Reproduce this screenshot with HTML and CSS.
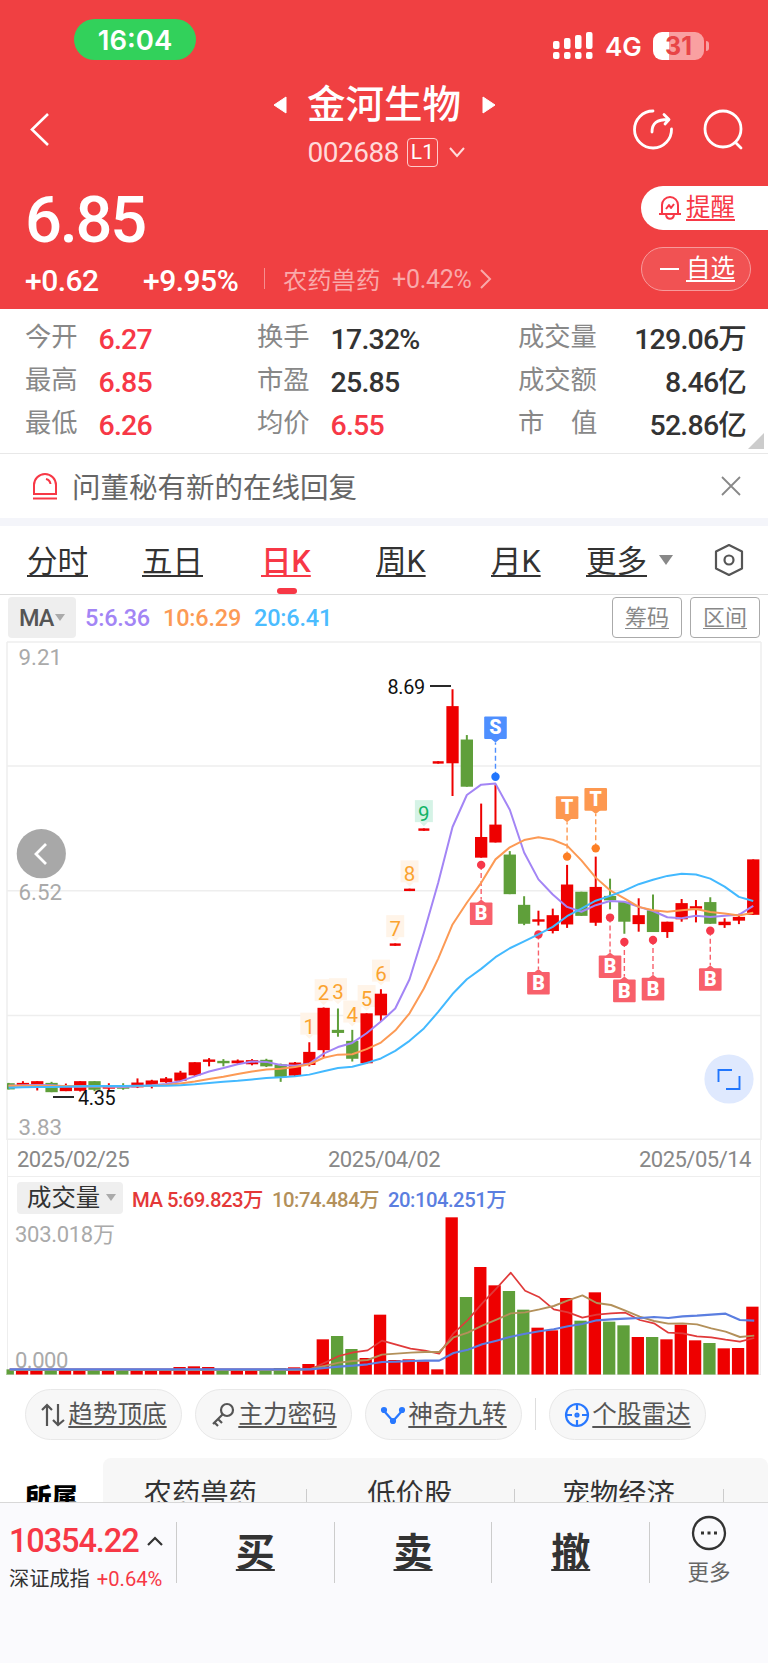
FILE: index.html
```html
<!DOCTYPE html>
<html lang="zh-CN">
<head>
  <meta charset="utf-8">
  <title>金河生物 002688</title>
  <link rel="stylesheet" href="styles.css">
</head>
<body>
  <div class="app">
    <header class="header">
      <div class="status-bar">
        <span class="clock">16:04</span>
        <div class="status-icons">
          <svg width="41" height="28" fill="#fff">
            <rect x="0" y="9" width="6.500" height="8" rx="2"/><rect x="11" y="6" width="6.500" height="11" rx="2"/>
            <rect x="22" y="3" width="6.500" height="14" rx="2"/><rect x="33" y="0" width="6.500" height="17" rx="2"/>
            <rect x="0" y="20" width="6.500" height="7" rx="2"/><rect x="11" y="20" width="6.500" height="7" rx="2"/>
            <rect x="22" y="20" width="6.500" height="7" rx="2"/><rect x="33" y="20" width="6.500" height="7" rx="2"/>
          </svg>
          <span class="network">4G</span>
          <span class="battery">31</span><i class="battery-tip"></i>
        </div>
      </div>

      <div class="title-bar">
        <svg class="back" width="20" height="33" fill="none" stroke="#fff" stroke-width="2.6"><path d="M19 1L3 16.500L19 32"/></svg>
        <div class="title">
          <div class="name-row">
            <svg width="14" height="18" fill="#fff" stroke="#fff" stroke-linejoin="round"><path d="M13 1V17L1 9Z"/></svg>
            <span class="name">金河生物</span>
            <svg width="14" height="18" fill="#fff" stroke="#fff" stroke-linejoin="round"><path d="M1 1V17L13 9Z"/></svg>
          </div>
          <div class="code-row">
            <span class="code">002688</span>
            <span class="level">L1</span>
            <svg width="16" height="11" fill="none" stroke="#ffdcdc" stroke-width="2"><path d="M1 1L8 9L15 1"/></svg>
          </div>
        </div>
        <div class="title-actions">
          <svg width="41" height="41" fill="none" stroke="#fff" stroke-width="2.8" stroke-linecap="round" stroke-linejoin="round">
            <path d="M20 2A18.500 18.500 0 1 0 38.500 20"/><path d="M19 23C19 14 24 10.500 35 10.500M31 5.500L36 10.500L32 15"/>
          </svg>
          <svg width="41" height="41" fill="none" stroke="#fff" stroke-width="2.8" stroke-linecap="round">
            <circle cx="20" cy="20" r="18"/><path d="M33 34L38 39"/>
          </svg>
        </div>
      </div>

      <div class="quote">
        <div class="quote-left">
          <div class="price">6.85</div>
          <div class="change-row">
            <span class="change">+0.62</span>
            <span class="percent">+9.95%</span>
            <i class="bar"></i>
            <span class="sector">农药兽药</span>
            <span class="sector-pct">+0.42%</span>
            <svg width="12" height="20" fill="none" stroke="#f9a9aa" stroke-width="2"><path d="M1 1L10 10L1 19"/></svg>
          </div>
        </div>
        <div class="quote-right">
          <div class="pill alert">
            <svg width="24" height="26" fill="none" stroke="#f73846" stroke-width="2" stroke-linejoin="round">
              <path d="M1 19H23M4 19V10A8 8 0 0 1 20 10V19M8 20C9 25 15 25 16 20M8 14L11 10L13 13L16 9"/>
            </svg>
            <span>提醒</span>
          </div>
          <div class="pill watch"><i></i><span>自选</span></div>
        </div>
      </div>
    </header>

    <section class="stats">
      <div class="col col-1">
        <p><label>今开</label><b class="up">6.27</b></p>
        <p><label>最高</label><b class="up">6.85</b></p>
        <p><label>最低</label><b class="up">6.26</b></p>
      </div>
      <div class="col col-2">
        <p><label>换手</label><b>17.32%</b></p>
        <p><label>市盈</label><b>25.85</b></p>
        <p><label>均价</label><b class="up">6.55</b></p>
      </div>
      <div class="col col-3">
        <p><label>成交量</label><b>129.06万</b></p>
        <p><label>成交额</label><b>8.46亿</b></p>
        <p><label>市&emsp;值</label><b>52.86亿</b></p>
      </div>
      <i class="corner"></i>
    </section>

    <section class="notice">
      <svg width="26" height="27" fill="none" stroke="#f73846" stroke-width="2">
        <path d="M2 21V12A11 11 0 0 1 24 12V21ZM1 25.500H25M14 6Q18 7 18.500 11"/>
      </svg>
      <span>问董秘有新的在线回复</span>
      <svg class="close" width="20" height="20" stroke="#888" stroke-width="1.8"><path d="M1 1L19 19M19 1L1 19"/></svg>
    </section>

    <nav class="tabs">
      <a>分时</a><a>五日</a><a class="active">日K</a><a>周K</a><a>月K</a><a class="more">更多</a>
      <i class="tri big"></i>
      <svg width="32" height="34" fill="none" stroke="#555" stroke-width="2.2" stroke-linejoin="round">
        <path d="M16 2L29 8.500V25.500L16 32L3 25.500V8.500Z"/><circle cx="16" cy="17" r="4.500"/>
      </svg>
    </nav>

    <div class="ma-row">
      <span class="ma-select">MA<i class="tri"></i></span>
      <span class="ma5">5:6.36</span><span class="ma10">10:6.29</span><span class="ma20">20:6.41</span>
      <a class="tool">筹码</a><a class="tool">区间</a>
    </div>

    <svg class="k-chart" id="kChart" width="768" height="500" viewBox="0 0 768 500"></svg>

    <div class="dates"><span>2025/02/25</span><span>2025/04/02</span><span>2025/05/14</span></div>

    <div class="volume">
      <div class="vol-row">
        <span class="vol-select">成交量<i class="tri"></i></span>
        <span class="v5">MA 5:69.823万</span><span class="v10">10:74.484万</span><span class="v20">20:104.251万</span>
      </div>
      <svg id="vChart" width="768" height="160" viewBox="0 0 768 160"></svg>
    </div>

    <div class="chips">
      <a class="chip">
        <svg width="26" height="26" fill="none" stroke="#555" stroke-width="2.2"><path d="M7 24V3M2 8L7 3L12 8M18 2V23M13 18L18 23L24 18"/></svg>
        <span>趋势顶底</span>
      </a>
      <a class="chip">
        <svg width="26" height="26" fill="none" stroke="#555" stroke-width="2.2"><circle cx="17" cy="8" r="6"/><path d="M13 12L3 22M8 17L12 21M4 20L8 24"/></svg>
        <span>主力密码</span>
      </a>
      <a class="chip">
        <svg width="26" height="26" fill="#2878ff" stroke="#2878ff" stroke-width="2.2"><path d="M4 9L13 19L22 9" fill="none"/><circle cx="4" cy="8" r="2"/><circle cx="13" cy="19" r="2"/><circle cx="22" cy="8" r="2"/></svg>
        <span>神奇九转</span>
      </a>
      <i class="chip-line"></i>
      <a class="chip">
        <svg width="26" height="26" fill="none" stroke="#2878ff" stroke-width="2.2"><circle cx="13" cy="13" r="11"/><path d="M13 2V8M13 18V24M2 13H8M18 13H24"/><circle cx="13" cy="13" r="1.500"/></svg>
        <span>个股雷达</span>
      </a>
    </div>

    <div class="concepts">
      <b>所属</b>
      <div class="concept-list"><span>农药兽药</span><span>低价股</span><span>宠物经济</span></div>
    </div>

    <footer class="footer">
      <div class="index">
        <div class="index-value">10354.22 <svg width="16" height="10" fill="none" stroke="#333" stroke-width="2.2"><path d="M1 9L8 2L15 9"/></svg></div>
        <div class="index-name">深证成指 <em>+0.64%</em></div>
      </div>
      <a class="trade">买</a>
      <a class="trade">卖</a>
      <a class="trade">撤</a>
      <div class="footer-more">
        <svg width="36" height="36" fill="none" stroke="#333" stroke-width="2.3">
          <circle cx="18" cy="18" r="16"/><path d="M10 18H13M16.500 18H19.500M23 18H26" stroke-width="3"/>
        </svg>
        <span>更多</span>
      </div>
    </footer>
  </div>
<script src="chart.js"></script>
</body>
</html>
```
FILE: styles.css
```css
* {
  box-sizing: border-box;
}

body {
  margin: 0;
  background: #fff;
  color: #333;
  font-family: Roboto, "Noto Sans CJK SC", sans-serif;
}

p {
  margin: 0;
}

svg {
  display: block;
  flex: none;
}

.app {
  width: 768px;
  height: 1663px;
  overflow: hidden;
  display: flex;
  flex-direction: column;
}

.app > * {
  flex: none;
}

/* red header */
.header {
  height: 309px;
  background: #f04042;
  color: #fff;
}

.status-bar {
  height: 80px;
  padding: 19px 59px 0 74px;
  display: flex;
  justify-content: space-between;
  font-family: Inter, sans-serif;
}

.clock {
  width: 122px;
  height: 41px;
  border-radius: 21px;
  background: #32d15b;
  font-size: 27.5px;
  font-weight: 600;
  line-height: 42px;
  text-align: center;
}

.status-icons {
  display: flex;
  height: 28px;
  margin-top: 13px;
  align-items: center;
}

.network {
  width: 38px;
  margin: 1px 10px 0 11px;
  font-size: 26px;
  font-weight: 600;
}

.battery {
  width: 51px;
  height: 28px;
  border-radius: 9px;
  background: linear-gradient(90deg, #fff 31%, #f9a0a1 31%);
  color: #e84446;
  font-size: 25px;
  font-weight: 700;
  line-height: 28px;
  text-align: center;
}

.battery-tip {
  width: 3px;
  height: 10px;
  margin-left: 2px;
  border-radius: 0 4px 4px 0;
  background: #f9a0a1;
}

.title-bar {
  height: 98px;
  padding: 0 24px 0 29px;
  display: flex;
}

.back {
  margin-top: 33px;
}

.title {
  margin-left: 223.5px;
}

.name-row {
  height: 50px;
  display: flex;
  align-items: center;
  gap: 20.5px;
}

.name {
  font-size: 38.5px;
  font-weight: 500;
  line-height: 50px;
}

.code-row {
  height: 44px;
  display: flex;
  align-items: center;
  padding-left: 35px;
}

.code {
  font-size: 28px;
  letter-spacing: -0.5px;
  color: #ffdada;
}

.level {
  width: 31px;
  height: 29px;
  margin: 0 11px 0 8px;
  border: 1px solid #ffcaca;
  border-radius: 4px;
  font-size: 21px;
  line-height: 27px;
  text-align: center;
}

.title-actions {
  display: flex;
  gap: 29px;
  margin-left: auto;
  padding-top: 29px;
}

.quote {
  display: flex;
  justify-content: space-between;
}

.quote-left {
  padding: 8px 0 0 25px;
}

.price {
  height: 68px;
  font-size: 65px;
  font-weight: 500;
  line-height: 68px;
  letter-spacing: -2.2px;
}

.change-row {
  height: 52px;
  display: flex;
  align-items: center;
}

.change,
.percent {
  width: 119px;
  font-size: 30px;
  font-weight: 500;
  letter-spacing: -0.5px;
}

.change {
  width: 118px;
}

.bar {
  width: 1px;
  height: 21px;
  margin: 0 18px 3px 2px;
  background: #f68e8f;
}

.sector {
  width: 109px;
  margin-top: -4px;
  font-size: 24.3px;
  color: #f9a9aa;
}

.sector-pct {
  width: 88px;
  margin-top: -2px;
  font-size: 25px;
  letter-spacing: -0.3px;
  color: #f9a9aa;
}

.change-row svg {
  margin-top: -3px;
}

.quote-right {
  width: 127px;
  padding-top: 8px;
}

.pill {
  height: 44px;
  padding-left: 17px;
  border-radius: 22px;
  display: flex;
  align-items: center;
  font-size: 24.5px;
  line-height: 40px;
}

.pill span,
.tabs a,
.tool,
.chip span,
.trade {
  text-decoration: underline;
  text-decoration-thickness: 2px;
  text-decoration-skip-ink: none;
  text-underline-offset: 3px;
}

.alert {
  border-radius: 22px 0 0 22px;
  background: #fff;
  color: #f73846;
}

.alert span {
  margin-left: 4px;
}

.watch {
  width: 110px;
  margin-top: 17px;
  border: 1px solid #f79a9b;
  background: #f15253;
}

.watch i {
  width: 19px;
  height: 2px;
  margin: 0 7px 0 1px;
  background: #fff;
}

/* stats table */
.stats {
  position: relative;
  height: 145px;
  padding: 7px 22px 0 25px;
  border-bottom: 1px solid #e8e8e8;
  display: flex;
}

.stats p {
  height: 43px;
  display: flex;
  align-items: center;
}

.stats label {
  font-size: 26.3px;
  line-height: 40px;
  color: #888;
  margin-top: -1px;
}

.stats b {
  font-size: 28.5px;
  font-weight: 500;
  line-height: 40px;
  letter-spacing: -0.8px;
  margin: 4px 0 0 21px;
}

.stats .up {
  color: #f73846;
}

.col-1 {
  width: 232px;
}

.col-2 {
  width: 261px;
}

.col-3 {
  flex: 1;
}

.col-3 p {
  justify-content: space-between;
}

.corner {
  position: absolute;
  right: 4px;
  bottom: 4px;
  border-left: 16px solid transparent;
  border-bottom: 16px solid #ccc;
}

.notice {
  height: 72px;
  padding: 0 27px 0 32px;
  border-bottom: 8px solid #f4f5fa;
  display: flex;
  align-items: center;
  font-size: 28.5px;
  color: #666;
}

.notice span {
  margin: -2px 0 0 14px;
}

.close {
  margin-left: auto;
}

/* period tabs */
.tabs {
  height: 69px;
  padding: 0 23px 0 27px;
  border-bottom: 1px solid #ddd;
  display: flex;
  align-items: center;
}

.tabs a {
  position: relative;
  width: 115px;
  padding-top: 3px;
  font-size: 30.5px;
  line-height: 60px;
}

.tabs a:nth-child(2) {
  width: 119px;
}

.tabs .active {
  color: #f73846;
  font-weight: 500;
}

.active::after {
  content: "";
  position: absolute;
  left: 16px;
  bottom: -2px;
  width: 20px;
  height: 6px;
  border-radius: 3px;
  background: #f73846;
}

.tabs .more {
  width: 73px;
  margin-left: -20px;
}

.tabs svg {
  margin-left: auto;
}

.tri {
  display: inline-block;
  border: 5px solid transparent;
  border-top: 7px solid #aaa;
  border-bottom: 0;
}

.tri.big {
  border-width: 10px 7px 0;
  border-top-color: #888;
}

.ma-row {
  height: 45px;
  padding: 0 8px;
  display: flex;
  align-items: center;
  font-size: 23.5px;
  font-weight: 500;
}

.ma-select {
  width: 68px;
  height: 41px;
  padding-left: 11px;
  border-radius: 4px;
  background: #eee;
  display: flex;
  align-items: center;
  gap: 2px;
  margin-right: 9px;
  letter-spacing: -1px;
  color: #555;
}

.ma5,
.ma10,
.ma20 {
  margin-top: 1px;
  letter-spacing: -0.2px;
}

.ma5 {
  width: 78px;
  color: #a385f5;
}

.ma10 {
  width: 91px;
  color: #fc9a55;
}

.ma20 {
  flex: 1;
  color: #4bbcff;
}

.tool {
  width: 70px;
  height: 41px;
  margin-left: 8px;
  border: 1px solid #aaa;
  border-radius: 4px;
  font-size: 22px;
  font-weight: 400;
  line-height: 40px;
  text-align: center;
  color: #888;
  text-decoration-thickness: 1px;
}

.dates {
  height: 37px;
  margin: 0 7px;
  padding: 3px 9px 0 9px;
  border: 1px solid #eee;
  border-top: 0;
  display: flex;
  justify-content: space-between;
  align-items: center;
  font-size: 22px;
  letter-spacing: -0.5px;
  color: #888;
}

/* volume */
.volume {
  height: 198px;
}

.vol-row {
  height: 38px;
  margin: 0 7px;
  padding: 3px 9px 0;
  border: 1px solid #eee;
  border-width: 0 1px;
  display: flex;
  align-items: center;
  font-size: 20.3px;
  font-weight: 500;
  letter-spacing: -0.5px;
}

.vol-select {
  width: 106px;
  height: 32px;
  margin-right: 9px;
  padding-left: 10px;
  border-radius: 4px;
  background: #efefef;
  display: flex;
  align-items: center;
  gap: 6px;
  font-size: 24.4px;
  font-weight: 400;
  line-height: 32px;
  letter-spacing: 0;
}

.v5 {
  width: 140px;
  color: #e43838;
}

.v10 {
  width: 116px;
  color: #b3905a;
}

.v20 {
  color: #5b7ee0;
}

.chips {
  height: 83px;
  padding: 14px 25px 0;
  display: flex;
  gap: 13px;
}

.chip {
  width: 157px;
  height: 51px;
  border: 1px solid #e8e8e8;
  border-radius: 26px;
  background: #f7f7f7;
  display: flex;
  align-items: center;
  justify-content: center;
  gap: 2px;
  font-size: 24.6px;
  line-height: 50px;
  color: #555;
}

.chip-line {
  width: 1px;
  height: 32px;
  margin-top: 9px;
  background: #ddd;
}

.concepts {
  height: 44px;
  display: flex;
  overflow: hidden;
}

.concepts b {
  width: 103px;
  padding: 20px 0 0 25px;
  font-size: 26.5px;
  font-weight: 900;
  line-height: 40px;
  color: #000;
}

.concept-list {
  flex: 1;
  height: 80px;
  border-radius: 8px 8px 0 0;
  background: #f7f7f7;
  display: flex;
}

.concept-list span {
  width: 208.5px;
  padding: 17px 2px 0 0;
  font-size: 28.3px;
  line-height: 40px;
  text-align: center;
  background: linear-gradient(#ccc, #ccc) right 31px / 1px 40px no-repeat;
}

.concept-list span:first-child {
  width: 203.5px;
  padding-right: 9px;
}

/* bottom trade bar */
.footer {
  height: 162px;
  padding-top: 19px;
  border-top: 1px solid #d8d8d8;
  background: #fafafd;
  display: flex;
}

.index {
  width: 176px;
  padding-left: 9px;
}

.index-value {
  height: 43px;
  margin-top: -3px;
  display: flex;
  align-items: center;
  gap: 8px;
  font-size: 32.5px;
  font-weight: 500;
  letter-spacing: -1.1px;
  color: #f73846;
}

.index-name {
  margin-top: 3px;
  font-size: 20.2px;
  line-height: 28px;
  white-space: nowrap;
}

.index-name em {
  font-style: normal;
  color: #f73846;
  margin-left: 2px;
}

.trade,
.footer-more {
  height: 61px;
  border-left: 1px solid #ccc;
}

.trade {
  width: 157.700px;
  font-size: 39px;
  font-weight: 700;
  line-height: 62px;
  text-align: center;
}

.footer-more {
  flex: 1;
  display: flex;
  flex-direction: column;
  align-items: center;
  font-size: 21.5px;
  line-height: 32px;
  color: #666;
}

.footer-more svg {
  margin: -7px 0 6px;
}
```
FILE: chart.js
```js
const RED = '#ee0000';
const GREEN = '#5f9f3a';
const kChart = document.getElementById('kChart');
const vChart = document.getElementById('vChart');

// [direction, high, top, bottom, low] in plot units
const candles = [
  ['g', 1286, 1287, 1305, 1305], ['r', 1281, 1286, 1293, 1295], ['r', 1281, 1281, 1292, 1308], ['g', 1283, 1286, 1313, 1313],
  ['r', 1288, 1296, 1310, 1310], ['r', 1281, 1281, 1309, 1311], ['g', 1281, 1281, 1306, 1310], ['r', 1287, 1297, 1302, 1308],
  ['g', 1287, 1297, 1303, 1306], ['r', 1273, 1285, 1299, 1301], ['r', 1277, 1279, 1293, 1302], ['r', 1269, 1273, 1284, 1286],
  ['r', 1251, 1256, 1280, 1280], ['r', 1226, 1226, 1264, 1266], ['r', 1214, 1218, 1225, 1238], ['g', 1217, 1222, 1229, 1238],
  ['r', 1218, 1221, 1229, 1232], ['r', 1217, 1220, 1232, 1235], ['g', 1216, 1219, 1238, 1240], ['g', 1230, 1232, 1270, 1283],
  ['r', 1225, 1227, 1265, 1268], ['r', 1168, 1196, 1234, 1238], ['r', 1067, 1068, 1191, 1212], ['g', 1070, 1132, 1141, 1152],
  ['g', 1132, 1164, 1216, 1224], ['r', 1084, 1084, 1229, 1230], ['r', 1014, 1027, 1090, 1108], ['r', 881, 881, 888, 888],
  ['r', 722, 722, 729, 729], ['r', 547, 547, 554, 554], ['r', 352, 352, 359, 359], ['r', 143, 192, 358, 453],
  ['g', 276, 289, 426, 426], ['r', 475, 572, 632, 632], ['r', 420, 536, 588, 588], ['g', 613, 623, 738, 738],
  ['g', 744, 769, 824, 828], ['r', 786, 811, 818, 829], ['r', 780, 799, 845, 852], ['r', 653, 710, 826, 836],
  ['g', 731, 731, 801, 801], ['r', 629, 717, 821, 830], ['g', 693, 743, 756, 782], ['g', 760, 760, 818, 853],
  ['r', 750, 799, 825, 847], ['g', 739, 785, 848, 848], ['r', 818, 818, 848, 865], ['r', 752, 764, 811, 818],
  ['r', 755, 773, 780, 820], ['g', 747, 761, 824, 824], ['r', 808, 818, 828, 836], ['r', 795, 804, 815, 825],
  ['r', 637, 637, 798, 798]
];

const ma5 = [1294, 1293, 1292, 1293, 1296, 1297, 1296, 1297, 1298, 1296, 1293, 1289, 1281, 1267, 1253, 1243, 1232, 1224, 1225, 1234, 1236, 1230, 1201, 1182, 1170, 1142, 1108, 1070, 985, 850, 705, 543, 450, 420, 417, 493, 617, 695, 739, 775, 789, 770, 758, 760, 775, 787, 805, 808, 801, 804, 801, 798, 772];
const ma10 = [1294, 1294, 1294, 1295, 1295, 1296, 1296, 1296, 1296, 1295, 1294, 1292, 1288, 1282, 1275, 1268, 1260, 1253, 1247, 1245, 1240, 1232, 1213, 1204, 1203, 1188, 1169, 1134, 1084, 1012, 925, 826, 763, 705, 637, 602, 581, 573, 580, 597, 640, 690, 727, 750, 775, 785, 789, 785, 781, 790, 794, 800, 792];
const ma20 = [1300, 1299, 1298, 1298, 1297, 1296, 1295, 1295, 1295, 1294, 1294, 1294, 1293, 1290, 1286, 1283, 1280, 1276, 1272, 1270, 1267, 1262, 1252, 1243, 1239, 1228, 1215, 1193, 1164, 1128, 1080, 1028, 985, 955, 921, 895, 875, 855, 833, 802, 780, 757, 743, 728, 709, 696, 685, 679, 681, 693, 716, 746, 758];

// top edge of each volume bar, baseline is 615
const volumes = [598, 600, 602, 599, 600, 598, 599, 601, 602, 597, 601, 602, 591, 589, 591, 600, 599, 600, 599, 594, 592, 582, 508, 498, 537, 564, 434, 570, 568, 574, 598, 142, 381, 291, 346, 363, 419, 473, 481, 384, 452, 367, 455, 466, 501, 501, 508, 464, 511, 519, 535, 534, 410];
const flat = v => Array(21).fill(v);
const v5 = [...flat(598), 598, 578, 558, 547, 541, 512, 524, 536, 542, 551, 490, 450, 400, 355, 308, 362, 382, 418, 427, 443, 434, 430, 428, 450, 460, 488, 490, 499, 502, 509, 515, 504];
const v10 = [...flat(600), 597, 588, 578, 573, 570, 554, 551, 548, 546, 546, 502, 488, 467, 449, 430, 427, 418, 408, 391, 376, 399, 405, 422, 440, 453, 461, 460, 463, 475, 485, 501, 497];
const v20 = [...flat(598), 598, 594, 590, 587, 583, 576, 575, 573, 572, 572, 549, 539, 523, 512, 500, 491, 484, 478, 469, 462, 451, 448, 446, 444, 441, 444, 439, 437, 434, 431, 450, 452];

const cx = i => 8.6 + 14.32 * i;
const ky = v => v / 2.9037;
const vy = v => v / 3 - 45;

function rect(x, y, w, h, fill) {
  return `<rect x="${x}" y="${y}" width="${w}" height="${h}" fill="${fill}"/>`;
}

function line(x1, y1, x2, y2, stroke, extra = '') {
  return `<line x1="${x1}" y1="${y1}" x2="${x2}" y2="${y2}" stroke="${stroke}" ${extra}/>`;
}

function text(x, y, str, size, fill, extra = '') {
  return `<text x="${x}" y="${y}" font-size="${size}" fill="${fill}" ${extra}>${str}</text>`;
}

function curve(data, toY, color, width = 2, shift = 0) {
  const pts = data.map((v, i) => `${cx(i) + shift},${toY(v)}`).join(' ');
  return `<polyline points="${pts}" fill="none" stroke="${color}" stroke-width="${width}" stroke-linejoin="round"/>`;
}

function drawKChart() {
  let s = '';
  [6, 366, 728, 1090, 1450].forEach(v => s += line(7, ky(v), 761, ky(v), '#eee', 'stroke-width="1.5"'));
  s += line(7, 2, 7, 500, '#eee', 'stroke-width="1.5"') + line(761, 2, 761, 500, '#eee', 'stroke-width="1.5"');
  s += text(18.5, 24.5, '9.21', 22.3, '#aaa') + text(18.5, 259.5, '6.52', 22.3, '#aaa') + text(18.5, 494.5, '3.83', 22.3, '#aaa');

  // nine-turn numbers
  [1082, 985, 982, 1047, 1002, 928, 799, 640, 465].forEach((v, n) => {
    const x = cx(21 + n), y = ky(v);
    const bg = n === 8 ? '#d5f3e6' : '#fff4e8';
    s += rect(x - 9, y, 18, 22, bg);
    s += `<path d="M${x - 4} ${y + 22}L${x} ${y + 26}L${x + 4} ${y + 22}" fill="${bg}"/>`;
    s += text(x, y + 21, n + 1, 20.5, n === 8 ? '#12b368' : '#fba32f', 'text-anchor="middle"');
  });

  candles.forEach(([dir, high, top, bottom, low], i) => {
    const color = dir === 'r' ? RED : GREEN;
    const small = i > 26 && i < 31;
    const w = small ? 11 : 12.3;
    const left = Math.max(cx(i) - w / 2, 7);
    s += line(cx(i), ky(high), cx(i), ky(low), color, 'stroke-width="2"');
    s += rect(left, ky(top), cx(i) + w / 2 - left, Math.max(ky(bottom) - ky(top), 2), color);
  });

  // [index, letter, dot, box top]
  const marks = [
    [34, 'S', 397, 222], [39, 'T', 629, 454], [41, 'T', 605, 430],
    [33, 'B', 653, 762], [37, 'B', 855, 964], [42, 'B', 806, 916],
    [43, 'B', 877, 986], [45, 'B', 871, 981], [49, 'B', 844, 953]
  ];
  const colors = { S: ['#4e8fff', '#2176fd'], T: ['#fd9850', '#fd7f24'], B: ['#f8606b', '#f6384a'] };
  marks.forEach(([i, letter, dot, top]) => {
    const x = cx(i), y = ky(top), d = ky(dot);
    const [box, dark] = colors[letter];
    const tip = letter === 'B' ? y - 3 : y + 26;
    const edge = letter === 'B' ? y + 1 : y + 22;
    s += line(x, d, x, tip, box, 'stroke-width="1.4" stroke-dasharray="5 3"');
    s += `<circle cx="${x}" cy="${d}" r="4.200" fill="${dark}"/>`;
    s += `<rect x="${x - 11.3}" y="${y}" width="22.6" height="22.6" rx="1" fill="${box}"/>`;
    s += `<path d="M${x - 5} ${edge}L${x} ${tip}L${x + 5} ${edge}" fill="${box}"/>`;
    s += text(x, y + 18, letter, 19.5, '#fff', 'text-anchor="middle" font-weight="900"');
  });

  s += curve(ma5, ky, '#a385f5') + curve(ma10, ky, '#fc9a55') + curve(ma20, ky, '#43b9ff');

  s += text(387.5, 54, '8.69', 19.8, '#111', 'letter-spacing="-0.3"') + line(430, 46, 451, 46, '#111', 'stroke-width="1.8"');
  s += text(78, 465, '4.35', 19.8, '#111', 'letter-spacing="-0.3"') + line(53, 457, 74, 457, '#111', 'stroke-width="1.8"');

  s += '<circle cx="41.300" cy="213.700" r="24.600" fill="#a8a8a8"/><path d="M46 204L36 214L46 224" fill="none" stroke="#fff" stroke-width="2.800"/>';
  s += '<circle cx="729" cy="439" r="24.600" fill="#dfe9fe"/><path d="M718.500 442V430H732M739.500 436V449H726" fill="none" stroke="#2176fd" stroke-width="1.900"/>';
  kChart.innerHTML = s;
}

function drawVolume() {
  let s = line(7.5, 0, 7.5, 160, '#eee') + line(760.5, 0, 760.5, 160, '#eee');
  volumes.forEach((v, i) => {
    const left = Math.max(cx(i) - 7, 6.500);
    s += rect(left, vy(v), cx(i) + 5.3 - left, vy(615) - vy(v), candles[i][0] === 'r' ? RED : GREEN);
  });
  s += line(7, 160, 761, 160, '#ddd');
  s += text(15, 27, '303.018万', 22, '#aaa', 'letter-spacing="-0.3"') + text(15, 152.5, '0.000', 22, '#aaa', 'letter-spacing="-0.5"');
  s += curve(v5, vy, '#e03a3a', 1.7, 1) + curve(v10, vy, '#b3905a', 1.9, 1) + curve(v20, vy, '#5b7ee0', 2.1, 1);
  vChart.innerHTML = s;
}

drawKChart();
drawVolume();
```
